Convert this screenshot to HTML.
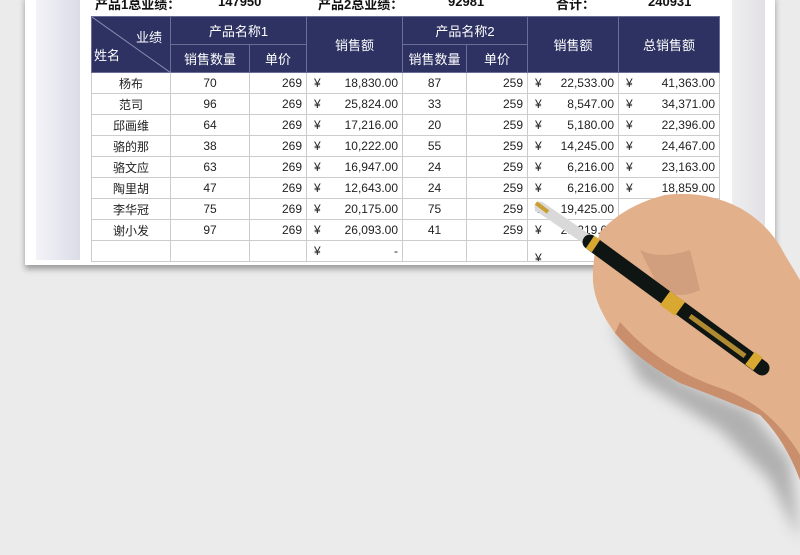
<!DOCTYPE html>
<html><head><meta charset="utf-8"><style>
body{margin:0;width:800px;height:555px;background:#ebebeb;position:relative;overflow:hidden;font-family:"Liberation Sans","Noto Sans CJK SC",sans-serif;}
.card{position:absolute;left:25px;top:-5px;width:750px;height:270px;background:#fff;box-shadow:0 4px 6px rgba(0,0,0,.35);}
.ls{position:absolute;left:36px;top:0;width:44px;height:260px;background:linear-gradient(90deg,#f3f3f8,#dcdce8);}
.rs{position:absolute;left:732px;top:0;width:33px;height:260px;background:linear-gradient(90deg,#eeeef0,#e2e0e4);}
.top{position:absolute;top:-6px;font-size:13px;font-weight:bold;color:#111;}
table{position:absolute;left:91px;top:16px;border-collapse:collapse;table-layout:fixed;font-size:12px;color:#222;}
td{border:1px solid #ccc;height:20px;padding:0 4px;text-align:center;white-space:nowrap;overflow:hidden;}
th{background:#2e3263;color:#fff;font-weight:normal;font-size:13px;border:1px solid #6a6d96;height:27px;padding:0;}
.m{text-align:right;position:relative}
.m:before{content:"¥";position:absolute;left:7px;}
</style></head><body>
<div class="card"></div>
<div class="ls"></div><div class="rs"></div>
<div class="top" style="left:95px">产品1总业绩：</div>
<div class="top" style="left:218px">147950</div>
<div class="top" style="left:318px">产品2总业绩：</div>
<div class="top" style="left:448px">92981</div>
<div class="top" style="left:556px">合计：</div>
<div class="top" style="left:648px">240931</div>
<table>
<colgroup><col style="width:79px"><col style="width:79px"><col style="width:57px"><col style="width:96px"><col style="width:64px"><col style="width:61px"><col style="width:91px"><col style="width:101px"></colgroup>
<tr><th rowspan="2" style="position:relative;text-align:left"><svg style="position:absolute;left:0;top:0" width="79" height="56"><line x1="0" y1="0" x2="79" y2="56" stroke="#8a8db0" stroke-width="1"/></svg><span style="position:absolute;right:8px;top:10px">业绩</span><span style="position:absolute;left:2px;top:28px">姓名</span></th><th colspan="2">产品名称1</th><th rowspan="2">销售额</th><th colspan="2">产品名称2</th><th rowspan="2">销售额</th><th rowspan="2">总销售额</th></tr>
<tr><th>销售数量</th><th>单价</th><th>销售数量</th><th>单价</th></tr>
<tr><td>杨布</td><td>70</td><td style="text-align:right">269</td><td class="m">18,830.00</td><td>87</td><td style="text-align:right">259</td><td class="m">22,533.00</td><td class="m">41,363.00</td></tr>
<tr><td>范司</td><td>96</td><td style="text-align:right">269</td><td class="m">25,824.00</td><td>33</td><td style="text-align:right">259</td><td class="m">8,547.00</td><td class="m">34,371.00</td></tr>
<tr><td>邱画维</td><td>64</td><td style="text-align:right">269</td><td class="m">17,216.00</td><td>20</td><td style="text-align:right">259</td><td class="m">5,180.00</td><td class="m">22,396.00</td></tr>
<tr><td>骆的那</td><td>38</td><td style="text-align:right">269</td><td class="m">10,222.00</td><td>55</td><td style="text-align:right">259</td><td class="m">14,245.00</td><td class="m">24,467.00</td></tr>
<tr><td>骆文应</td><td>63</td><td style="text-align:right">269</td><td class="m">16,947.00</td><td>24</td><td style="text-align:right">259</td><td class="m">6,216.00</td><td class="m">23,163.00</td></tr>
<tr><td>陶里胡</td><td>47</td><td style="text-align:right">269</td><td class="m">12,643.00</td><td>24</td><td style="text-align:right">259</td><td class="m">6,216.00</td><td class="m">18,859.00</td></tr>
<tr><td>李华冠</td><td>75</td><td style="text-align:right">269</td><td class="m">20,175.00</td><td>75</td><td style="text-align:right">259</td><td class="m">19,425.00</td><td class="m"></td></tr>
<tr><td>谢小发</td><td>97</td><td style="text-align:right">269</td><td class="m">26,093.00</td><td>41</td><td style="text-align:right">259</td><td class="m">25,219.00</td><td class="m"></td></tr>
<tr><td></td><td></td><td></td><td class="m">-</td><td></td><td></td><td class="m"></td><td class="m"></td></tr>
</table>
<svg style="position:absolute;left:0;top:0" width="800" height="555">
<defs><filter id="b"><feGaussianBlur stdDeviation="7"/></filter></defs>
<path d="M610,320 L680,380 L750,410 L790,460 L800,540 L770,480 L720,430 L640,380 Z" fill="rgba(0,0,0,.25)" filter="url(#b)"/>
<path d="M600,232 Q625,205 665,195 Q705,190 740,208 Q770,225 785,255 L800,280 L800,480 Q785,440 760,415 Q720,398 680,383 Q640,362 615,333 Q595,306 593,282 Q592,258 600,232 Z" fill="#e3b08c"/>
<path d="M615,333 Q640,362 680,383 Q720,398 760,415 Q785,440 800,480 L800,455 Q770,405 720,388 Q660,368 620,322 Z" fill="#c98e6c"/>
<path d="M640,250 Q660,260 690,250 L700,290 Q680,300 660,290 Z" fill="#c79474" opacity=".6"/>
<line x1="540" y1="207" x2="588" y2="240" stroke="#d9d9d9" stroke-width="11" stroke-linecap="round"/>
<line x1="536" y1="203" x2="548" y2="212" stroke="#c9a030" stroke-width="4"/>
<line x1="590" y1="242" x2="762" y2="368" stroke="#0e1512" stroke-width="15" stroke-linecap="round"/>
<line x1="665" y1="298" x2="680" y2="309" stroke="#d8a830" stroke-width="17"/>
<line x1="690" y1="316" x2="745" y2="356" stroke="#b08a30" stroke-width="5"/>
<line x1="750" y1="358" x2="758" y2="364" stroke="#d8a830" stroke-width="16"/>
<line x1="590" y1="242" x2="596" y2="246" stroke="#d8a830" stroke-width="15"/>
</svg>
</body></html>
